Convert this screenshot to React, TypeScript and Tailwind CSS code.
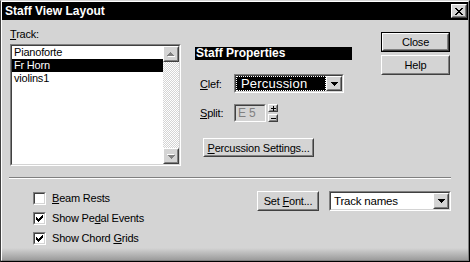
import React from 'react'

type BoxProps = { className?: string; inner?: string; children?: React.ReactNode }

// classic 3d edges
const Raised = ({ className = '', inner = '', children }: BoxProps) => (
  <div className={`border border-t-white border-l-white border-r-[#404040] border-b-[#404040] ${className}`}>
    <div className={`w-full h-full border border-t-[#d4d4d4] border-l-[#d4d4d4] border-r-[#808080] border-b-[#808080] bg-[#d4d4d4] flex items-center justify-center ${inner}`}>
      {children}
    </div>
  </div>
)

const Sunken = ({ className = '', inner = '', children }: BoxProps) => (
  <div className={`border border-t-[#808080] border-l-[#808080] border-r-white border-b-white ${className}`}>
    <div className={`w-full h-full border border-t-[#404040] border-l-[#404040] border-r-[#d4d4d4] border-b-[#d4d4d4] ${inner}`}>
      {children}
    </div>
  </div>
)

const DownArrow = () => (
  <svg width="7" height="4" viewBox="0 0 7 4" shapeRendering="crispEdges">
    <path d="M0 0h7v1H0zM1 1h5v1H1zM2 2h3v1H2zM3 3h1v1H3z" fill="#000" />
  </svg>
)

const GrayArrow = ({ up }: { up?: boolean }) => (
  <svg width="8" height="5" viewBox="0 0 8 5" shapeRendering="crispEdges" className={up ? '' : 'rotate-180'}>
    <path d="M4 1h1v1H4zM3 2h3v1H3zM2 3h5v1H2zM1 4h7v1H1z" fill="#fff" />
    <path d="M3 0h1v1H3zM2 1h3v1H2zM1 2h5v1H1zM0 3h7v1H0z" fill="#808080" />
  </svg>
)

const Check = ({ on }: { on?: boolean }) => (
  <Sunken className="w-[13px] h-[13px] shrink-0" inner="bg-white flex items-center justify-center">
    {on && (
      <svg width="7" height="7" viewBox="0 0 7 7" shapeRendering="crispEdges">
        <path d="M6 0h1v3H6zM5 1h1v3H5zM4 2h1v3H4zM3 3h1v3H3zM2 4h1v3H2zM1 3h1v3H1zM0 2h1v3H0z" fill="#000" />
      </svg>
    )}
  </Sunken>
)

const tracks = ['Pianoforte', 'Fr Horn', 'violins1']

export default function App() {
  return (
    <div className="w-[470px] h-[262px] border border-t-[#d4d4d4] border-l-[#404040] border-r-black border-b-black font-['Liberation_Sans',Arial,sans-serif] text-[11px] tracking-[-0.2px] text-black">
      <div className="w-full h-full flex flex-col border border-t-white border-l-white border-r-[#808080] border-b-[#808080] bg-[#d4d4d4]">
        {/* title bar */}
        <div className="h-[19px] bg-black flex items-center justify-between pl-[3px] pr-[1px]">
          <span className="text-white font-bold text-[12px] tracking-normal">Staff View Layout</span>
          <Raised className="w-[16px] h-[14px]">
            <svg width="8" height="7" viewBox="0 0 8 7" shapeRendering="crispEdges">
              <path d="M0 0h2v1H0zM6 0h2v1H6zM1 1h2v1H1zM5 1h2v1H5zM2 2h4v1H2zM3 3h2v1H3zM2 4h4v1H2zM1 5h2v1H1zM5 5h2v1H5zM0 6h2v1H0zM6 6h2v1H6z" fill="#000" />
            </svg>
          </Raised>
        </div>

        {/* top section */}
        <div className="flex pl-[8px]">
          <div className="w-[171px] pt-[7px]">
            <div className="h-[14px] leading-[14px]"><u>T</u>rack:</div>
            <Sunken className="w-[171px] h-[122px] mt-[3px]" inner="bg-white flex">
              <div className="flex-1">
                {tracks.map((t, i) => (
                  <div
                    key={t}
                    className={`h-[13px] leading-[13px] pl-[2px] ${i === 1 ? 'bg-black text-white' : ''}`}
                  >
                    {t}
                  </div>
                ))}
              </div>
              <div className="w-[16px] flex flex-col">
                <Raised className="w-[16px] h-[16px]"><GrayArrow up /></Raised>
                <div className="flex-1 bg-[repeating-conic-gradient(#ffffff_0_25%,#d4d4d4_0_50%)] bg-[length:2px_2px]" />
                <Raised className="w-[16px] h-[16px]"><GrayArrow /></Raised>
              </div>
            </Sunken>
          </div>

          <div className="w-[157px] ml-[14px] pt-[27px]">
            <div className="h-[13px] leading-[13px] bg-black text-white font-bold text-[12px] tracking-normal pl-[1px]">
              Staff Properties
            </div>
            <div className="flex items-center mt-[14px] h-[19px]">
              <div className="w-[39px] pl-[5px]"><u>C</u>lef:</div>
              <Sunken className="w-[110px] h-[19px]" inner="bg-white flex">
                <div className="flex-1 bg-black text-white border border-dotted border-white pl-[4px] leading-[13px] text-[13px] tracking-[0.2px]">
                  Percussion
                </div>
                <Raised className="w-[16px] h-full"><DownArrow /></Raised>
              </Sunken>
            </div>
            <div className="flex items-center mt-[11px] h-[18px]">
              <div className="w-[39px] pl-[5px]"><u>S</u>plit:</div>
              <Sunken className="w-[32px] h-[18px]" inner="bg-[#d4d4d4] text-[#808080] pl-[2px] leading-[14px] text-[12px]">
                E 5
              </Sunken>
              <div className="ml-[2px] flex flex-col gap-[2px]">
                <Raised className="w-[10px] h-[8px]">
                  <svg width="5" height="5" viewBox="0 0 5 5" shapeRendering="crispEdges">
                    <path d="M2 0h1v5H2zM0 2h5v1H0z" fill="#000" />
                  </svg>
                </Raised>
                <Raised className="w-[10px] h-[8px]">
                  <svg width="5" height="1" viewBox="0 0 5 1" shapeRendering="crispEdges">
                    <path d="M0 0h5v1H0z" fill="#000" />
                  </svg>
                </Raised>
              </div>
            </div>
            <Raised className="w-[111px] h-[19px] mt-[16px] ml-[8px]">
              <span><u>P</u>ercussion Settings...</span>
            </Raised>
          </div>

          <div className="w-[69px] ml-[29px] pt-[12px]">
            <div className="border border-black w-[69px] h-[20px]">
              <Raised className="w-full h-full">Close</Raised>
            </div>
            <Raised className="w-[69px] h-[20px] mt-[3px]">Help</Raised>
          </div>
        </div>

        {/* separator */}
        <div className="ml-[7px] w-[442px] h-[2px] mt-[11px] border-t border-t-[#808080] border-b border-b-white" />

        {/* bottom section */}
        <div className="flex mt-[9px]">
          <div className="ml-[31px] w-[224px] flex flex-col">
            {[
              [<><u>B</u>eam Rests</>, false],
              [<>Show Pe<u>d</u>al Events</>, true],
              [<>Show Chord <u>G</u>rids</>, true],
            ].map(([label, on], i) => (
              <div key={i} className="h-[20px] flex items-center gap-[6px]">
                <Check on={on as boolean} />
                <span>{label as React.ReactNode}</span>
              </div>
            ))}
          </div>
          <Raised className="w-[62px] h-[20px] mt-[3px]">
            <span>Set <u>F</u>ont...</span>
          </Raised>
          <Sunken className="w-[122px] h-[20px] mt-[3px] ml-[10px]" inner="bg-white flex items-center">
            <span className="flex-1 pl-[3px] text-[11.5px]">Track names</span>
            <Raised className="w-[16px] h-full"><DownArrow /></Raised>
          </Sunken>
        </div>

        <div className="flex-1" />
        <div className="h-[12px] bg-gradient-to-b from-[#d4d4d4] to-[#9c9c9c]" />
      </div>
    </div>
  )
}
